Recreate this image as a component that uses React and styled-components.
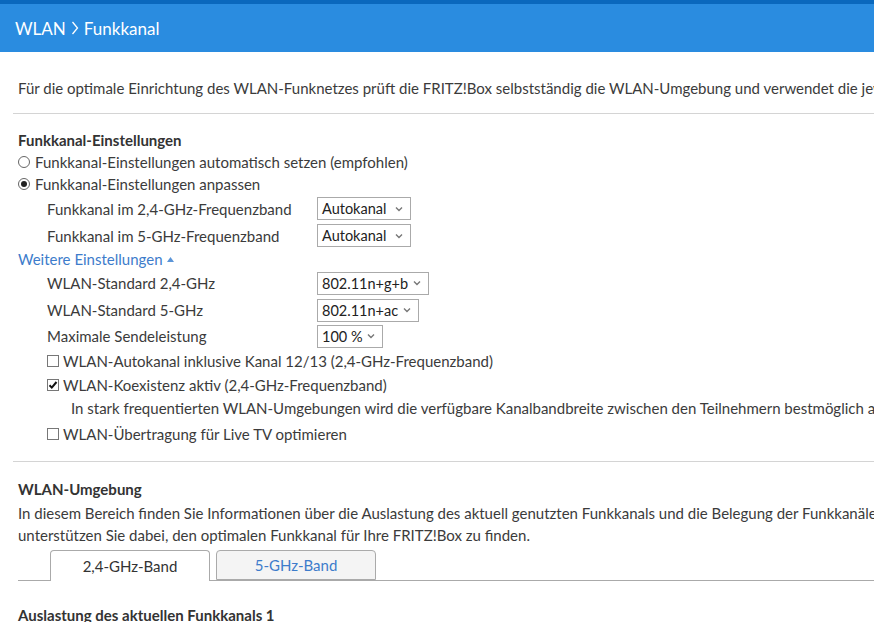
import React from "react";
import styled, { createGlobalStyle } from "styled-components";

const Global = createGlobalStyle`
  html, body { margin: 0; padding: 0; background: #fff; overflow: hidden; }
  body { font-family: Lato, "Open Sans", "Liberation Sans", sans-serif; color: #3b3b3b; font-size: 15px; }
`;

const Page = styled.div`
  width: 874px;
  height: 622px;
  overflow: hidden;
`;

const TopStrip = styled.div`
  height: 4px;
  background: #0a68bd;
`;

const Header = styled.header`
  height: 48px;
  background: #2a8ce0;
  display: flex;
  align-items: center;
  gap: 5px;
  padding-left: 15px;
  color: #fff;
  font-size: 17px;
  white-space: nowrap;
`;

const Content = styled.main`
  width: 1200px;
  padding-left: 13px;
`;

const Intro = styled.p`
  margin: 25px 0 14px;
  padding-left: 5px;
  line-height: 22px;
  white-space: nowrap;
`;

const Divider = styled.hr`
  margin: ${(p) => p.$top || 0}px 0 0;
  border: 0;
  border-top: 1px solid #d4d4d4;
`;

const Section = styled.section`
  padding-left: 5px;
  padding-top: ${(p) => p.$top || 0}px;
`;

const Heading = styled.h2`
  margin: 0;
  font-size: 15px;
  font-weight: 700;
  line-height: 20px;
  color: #333;
`;

const Row = styled.div`
  display: flex;
  align-items: center;
  height: ${(p) => p.$h || 24}px;
  padding-left: ${(p) => p.$indent || 0}px;
  white-space: nowrap;
  gap: ${(p) => p.$gap ?? 5}px;
`;

const FieldLabel = styled.span`
  width: 270px;
  flex: none;
`;

const RadioCircle = styled.span`
  width: 12px;
  height: 12px;
  border: 1px solid #666;
  border-radius: 50%;
  box-sizing: border-box;
  flex: none;
  display: flex;
  align-items: center;
  justify-content: center;
  &::after {
    content: "";
    width: 6px;
    height: 6px;
    border-radius: 50%;
    background: ${(p) => (p.$on ? "#222" : "transparent")};
  }
`;

const CheckBox = styled.span`
  width: 12px;
  height: 12px;
  border: 1px solid #777;
  box-sizing: border-box;
  flex: none;
  display: flex;
  align-items: center;
  justify-content: center;
`;

const SelectBox = styled.div`
  width: ${(p) => p.$w}px;
  height: 23px;
  box-sizing: border-box;
  border: 1px solid #aaa;
  display: flex;
  align-items: center;
  justify-content: space-between;
  padding: 0 7px 0 4px;
  color: #222;
  font-size: 14.5px;
  flex: none;
`;

const Link = styled.a`
  color: #3d7ccb;
  text-decoration: none;
  display: flex;
  align-items: center;
  gap: 4px;
`;

const Desc = styled.div`
  padding-left: 53px;
  height: 24px;
  line-height: 24px;
  white-space: nowrap;
`;

const Para = styled.p`
  margin: 3px 0 0;
  line-height: 22px;
  white-space: nowrap;
`;

const TabBar = styled.div`
  margin-top: 4px;
  display: flex;
  align-items: flex-end;
  gap: 6px;
  padding-left: 32px;
  border-bottom: 1px solid #aaa;
  height: 30px;
`;

const Tab = styled.div`
  width: 160px;
  height: ${(p) => (p.$active ? 31 : 30)}px;
  margin-bottom: ${(p) => (p.$active ? -1 : 0)}px;
  box-sizing: border-box;
  border: 1px solid #aaa;
  border-bottom: ${(p) => (p.$active ? "none" : "1px solid #aaa")};
  border-radius: 4px 4px 0 0;
  background: ${(p) => (p.$active ? "#fff" : "#f4f4f4")};
  color: ${(p) => (p.$active ? "#333" : "#3d7ccb")};
  display: flex;
  align-items: center;
  justify-content: center;
  padding-bottom: 1px;
`;

const Chevron = () => (
  <svg width="8" height="6" viewBox="0 0 8 6">
    <polyline points="1,1.5 4,4.5 7,1.5" fill="none" stroke="#777" strokeWidth="1.4" />
  </svg>
);

const Check = () => (
  <svg width="10" height="10" viewBox="0 0 10 10">
    <polyline points="1.5,5.2 3.8,7.6 8.5,2" fill="none" stroke="#111" strokeWidth="2" />
  </svg>
);

const Select = ({ w, value }) => (
  <SelectBox $w={w}>
    <span>{value}</span>
    <Chevron />
  </SelectBox>
);

export default function App() {
  return (
    <Page>
      <Global />
      <TopStrip />
      <Header>
        <span>WLAN</span>
        <svg width="8" height="16" viewBox="0 0 8 16">
          <polyline points="1.5,2 6.5,8 1.5,14" fill="none" stroke="#fff" strokeWidth="1.3" />
        </svg>
        <span>Funkkanal</span>
      </Header>
      <Content>
        <Intro>
          Für die optimale Einrichtung des WLAN-Funknetzes prüft die FRITZ!Box selbstständig die WLAN-Umgebung und verwendet die jeweils besten Einstellungen.
        </Intro>
        <Divider />
        <Section $top={16}>
          <Heading>Funkkanal-Einstellungen</Heading>
          <Row $h={23}>
            <RadioCircle />
            <span>Funkkanal-Einstellungen automatisch setzen (empfohlen)</span>
          </Row>
          <Row $h={22}>
            <RadioCircle $on />
            <span>Funkkanal-Einstellungen anpassen</span>
          </Row>
          <Row $h={27} $indent={29} $gap={0}>
            <FieldLabel>Funkkanal im 2,4-GHz-Frequenzband</FieldLabel>
            <Select w={94} value="Autokanal" />
          </Row>
          <Row $h={27} $indent={29} $gap={0}>
            <FieldLabel>Funkkanal im 5-GHz-Frequenzband</FieldLabel>
            <Select w={94} value="Autokanal" />
          </Row>
          <Row $h={20}>
            <Link href="#">
              Weitere Einstellungen
              <svg width="7" height="5" viewBox="0 0 7 5">
                <polygon points="0,5 3.5,0 7,5" fill="#5b95d8" />
              </svg>
            </Link>
          </Row>
          <Row $h={28} $indent={29} $gap={0}>
            <FieldLabel>WLAN-Standard 2,4-GHz</FieldLabel>
            <Select w={112} value="802.11n+g+b" />
          </Row>
          <Row $h={26} $indent={29} $gap={0}>
            <FieldLabel>WLAN-Standard 5-GHz</FieldLabel>
            <Select w={102} value="802.11n+ac" />
          </Row>
          <Row $h={26} $indent={29} $gap={0}>
            <FieldLabel>Maximale Sendeleistung</FieldLabel>
            <Select w={66} value="100 %" />
          </Row>
          <Row $indent={29} $gap={4}>
            <CheckBox />
            <span>WLAN-Autokanal inklusive Kanal 12/13 (2,4-GHz-Frequenzband)</span>
          </Row>
          <Row $h={23} $indent={29} $gap={4}>
            <CheckBox>
              <Check />
            </CheckBox>
            <span>WLAN-Koexistenz aktiv (2,4-GHz-Frequenzband)</span>
          </Row>
          <Desc>
            In stark frequentierten WLAN-Umgebungen wird die verfügbare Kanalbandbreite zwischen den Teilnehmern bestmöglich aufgeteilt.
          </Desc>
          <Row $h={27} $indent={29} $gap={4}>
            <CheckBox />
            <span>WLAN-Übertragung für Live TV optimieren</span>
          </Row>
        </Section>
        <Divider $top={14} />
        <Section $top={17}>
          <Heading>WLAN-Umgebung</Heading>
          <Para>
            In diesem Bereich finden Sie Informationen über die Auslastung des aktuell genutzten Funkkanals und die Belegung der Funkkanäle in Ihrer Umgebung. Die Diagramme
            <br />
            unterstützen Sie dabei, den optimalen Funkkanal für Ihre FRITZ!Box zu finden.
          </Para>
          <TabBar>
            <Tab $active>2,4-GHz-Band</Tab>
            <Tab>5-GHz-Band</Tab>
          </TabBar>
        </Section>
        <Section $top={24}>
          <Heading>Auslastung des aktuellen Funkkanals 1</Heading>
        </Section>
      </Content>
    </Page>
  );
}
